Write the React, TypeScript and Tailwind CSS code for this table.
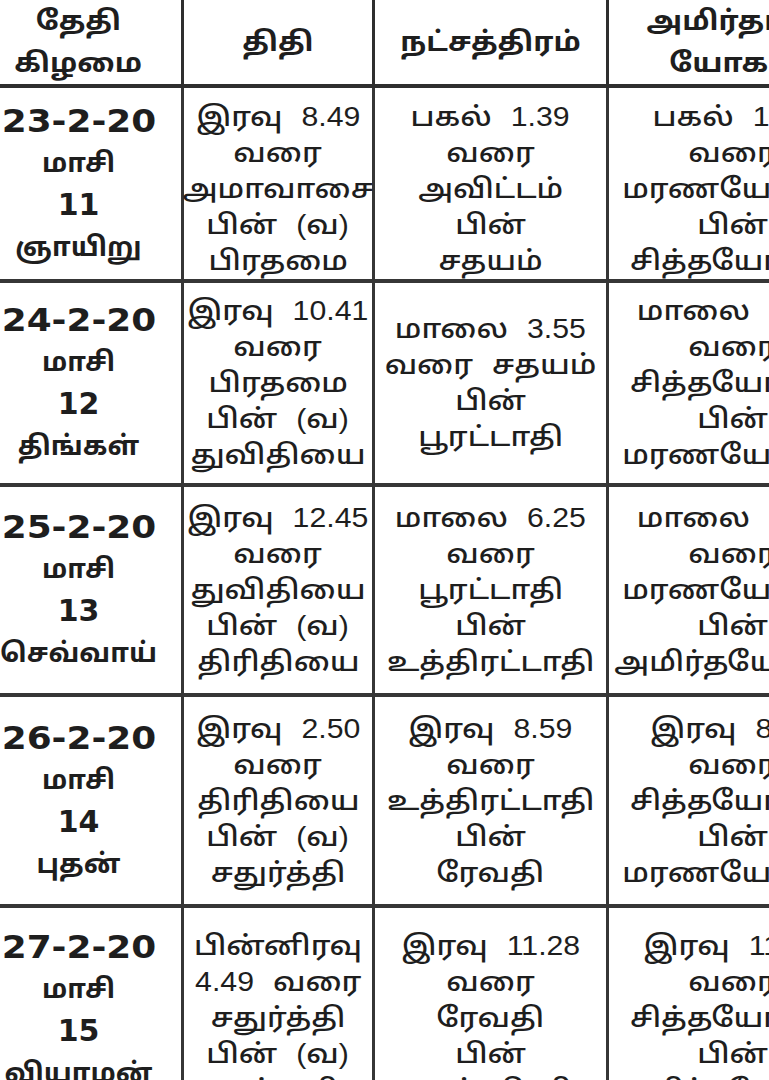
const rows = [
  {
    h: "h-[195px]",
    pad: "pt-[10px]",
    day: ["23-2-20", "மாசி", "11", "ஞாயிறு"],
    thithi: ["இரவு 8.49", "வரை", "அமாவாசை", "பின் (வ)", "பிரதமை"],
    star: ["பகல் 1.39", "வரை", "அவிட்டம்", "பின்", "சதயம்"],
    yogam: ["பகல் 1.39", "வரை", "மரணயோகம்", "பின்", "சித்தயோகம்"],
  },
  {
    h: "h-[204px]",
    pad: "",
    day: ["24-2-20", "மாசி", "12", "திங்கள்"],
    thithi: ["இரவு 10.41", "வரை", "பிரதமை", "பின் (வ)", "துவிதியை"],
    star: ["மாலை 3.55", "வரை சதயம்", "பின்", "பூரட்டாதி"],
    yogam: ["மாலை 3.55", "வரை", "சித்தயோகம்", "பின்", "மரணயோகம்"],
  },
  {
    h: "h-[210px]",
    pad: "",
    day: ["25-2-20", "மாசி", "13", "செவ்வாய்"],
    thithi: ["இரவு 12.45", "வரை", "துவிதியை", "பின் (வ)", "திரிதியை"],
    star: ["மாலை 6.25", "வரை", "பூரட்டாதி", "பின்", "உத்திரட்டாதி"],
    yogam: ["மாலை 6.25", "வரை", "மரணயோகம்", "பின்", "அமிர்தயோகம்"],
  },
  {
    h: "h-[211px]",
    pad: "",
    day: ["26-2-20", "மாசி", "14", "புதன்"],
    thithi: ["இரவு 2.50", "வரை", "திரிதியை", "பின் (வ)", "சதுர்த்தி"],
    star: ["இரவு 8.59", "வரை", "உத்திரட்டாதி", "பின்", "ரேவதி"],
    yogam: ["இரவு 8.59", "வரை", "சித்தயோகம்", "பின்", "மரணயோகம்"],
  },
  {
    h: "h-[220px]",
    pad: "",
    day: ["27-2-20", "மாசி", "15", "வியாழன்"],
    thithi: ["பின்னிரவு", "4.49 வரை", "சதுர்த்தி", "பின் (வ)", "பஞ்சமி"],
    star: ["இரவு 11.28", "வரை", "ரேவதி", "பின்", "அஸ்வினி"],
    yogam: ["இரவு 11.28", "வரை", "சித்தயோகம்", "பின்", "அமிர்தயோகம்"],
  },
];

const body = "font-['Liberation_Sans','Noto_Sans_Tamil','Noto_Sans',sans-serif]";
// wider digits for the date column
const dateFont = "font-['DejaVu_Sans','Noto_Sans_Tamil','Noto_Sans',sans-serif]";

function DayCell({ lines, last }: { lines: string[]; last?: boolean }) {
  return (
    <div
      className={`flex flex-col items-center justify-center border-r-[3px] border-[#363636] text-[27px] leading-[42px] font-bold ${
        last ? "pb-[16px]" : "border-b-[4px]"
      }`}
    >
      {lines.map((l, i) => (
        <span
          key={i}
          className={`inline-block whitespace-nowrap ${
            i === 0 ? `${dateFont} scale-x-[1.12] text-[32px]` : i === 2 ? `${dateFont} text-[30px]` : ""
          }`}
        >
          {l}
        </span>
      ))}
    </div>
  );
}

function Cell({ lines, last, bottom, pad }: { lines: string[]; last?: boolean; bottom?: boolean; pad: string }) {
  return (
    <div
      className={`flex flex-col items-center justify-center border-[#363636] text-[27px] leading-[36px] font-medium ${pad} ${
        last ? "" : "border-r-[3px]"
      } ${bottom ? "" : "border-b-[4px]"}`}
    >
      {lines.map((l, i) => (
        <span key={i} className="inline-block scale-x-[1.12] whitespace-nowrap [word-spacing:0.35em]">
          {l}
        </span>
      ))}
    </div>
  );
}

export default function App() {
  return (
    <div className={`h-[1080px] w-[769px] overflow-hidden bg-white text-[#1e1e1e] ${body}`}>
      <div className="-ml-[24px] grid w-[880px] grid-cols-[208px_191px_234px_247px]">
        {[["தேதி", "கிழமை"], ["திதி"], ["நட்சத்திரம்"], ["அமிர்தாதி", "யோகம்"]].map((h, i) => (
          <div
            key={i}
            className={`flex h-[88px] flex-col items-center justify-center border-b-[4px] border-[#2e2e2e] text-[27px] leading-[42px] font-bold ${
              i < 3 ? "border-r-[3px]" : ""
            }`}
          >
            {h.map((t) => (
              <span key={t} className="inline-block scale-x-[1.08] whitespace-nowrap">
                {t}
              </span>
            ))}
          </div>
        ))}
        {rows.map((r, i) => {
          const bottom = i === rows.length - 1;
          return (
            <div key={i} className="contents">
              <div className={`${r.h} grid`}>
                <DayCell lines={r.day} last={bottom} />
              </div>
              <div className={`${r.h} grid`}>
                <Cell lines={r.thithi} bottom={bottom} pad={r.pad} />
              </div>
              <div className={`${r.h} grid`}>
                <Cell lines={r.star} bottom={bottom} pad={r.pad} />
              </div>
              <div className={`${r.h} grid`}>
                <Cell lines={r.yogam} last bottom={bottom} pad={r.pad} />
              </div>
            </div>
          );
        })}
      </div>
    </div>
  );
}
